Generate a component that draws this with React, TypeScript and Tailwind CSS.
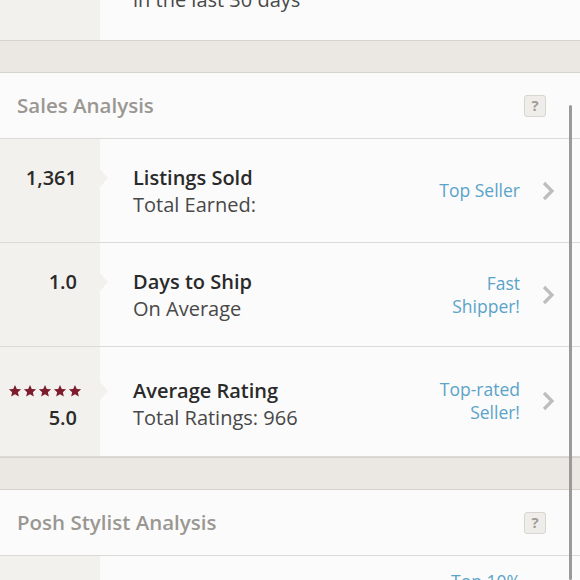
import React from 'react';

const Stars = () => (
	<div className="flex gap-[1px] h-[27px] items-center">
		{[0, 1, 2, 3, 4].map((i) => (
			<svg key={i} width="14" height="14" viewBox="0 0 24 24" fill="#7d1d2c">
				<path d="M12 1.5l3.1 7 7.4.6-5.6 5 1.7 7.4L12 17.6l-6.6 3.9 1.7-7.4-5.6-5 7.4-.6z" />
			</svg>
		))}
	</div>
);

const Chevron = () => (
	<svg width="14" height="22" viewBox="0 0 14 22" fill="none">
		<path d="M3 3l8 8-8 8" stroke="#bdbdbd" strokeWidth="3.2" />
	</svg>
);

type RowProps = {
	value: React.ReactNode;
	valueSub?: React.ReactNode;
	title: string;
	sub: React.ReactNode;
	badge?: React.ReactNode;
	tall?: boolean;
};

const StatRow = ({ value, valueSub, title, sub, badge, tall }: RowProps) => (
	<div className={`flex w-full border-b border-[#dcdad7] ${tall ? 'h-[110px]' : 'h-[104px]'}`}>
		<div className={`w-[100px] shrink-0 bg-[#f3f1ee] flex flex-col items-end justify-center pr-[23px] ${tall ? 'pt-[5px]' : ''}`}>
			{value}
			<div className="h-[27px] text-[20px] leading-[27px] font-semibold text-[#2a2a2a]">{valueSub}</div>
		</div>
		<div className={`flex flex-1 items-center ${tall ? 'pt-[5px]' : ''}`}>
			<div className="relative flex flex-col pl-[33px] flex-1">
				<div className="absolute left-0 top-[5px] w-0 h-0 border-y-[9px] border-y-transparent border-l-[8px] border-l-[#f3f1ee]"></div>
				<div className="text-[20px] leading-[27px] font-semibold text-[#2a2a2a]">{title}</div>
				<div className="text-[20px] leading-[27px] text-[#484848]">{sub}</div>
			</div>
			{badge && (
				<div className={`flex items-center gap-[21px] pr-[25px] ${tall ? '-mt-[6px]' : ''}`}>
					<div className="text-[17.5px] leading-[23px] text-[#5aa3c9] text-right">{badge}</div>
					<Chevron />
				</div>
			)}
		</div>
	</div>
);

const Band = () => <div className="h-[33px] w-full bg-[#ebe8e3] border-y border-[#d6d3ce]"></div>;

const Header = ({ text }: { text: string }) => (
	<div className="flex items-center justify-between h-[66px] w-full border-b border-[#dcdad7] pl-[17px] pr-[34px]">
		<div className="text-[20.5px] font-semibold text-[#9a9793]">{text}</div>
		<div className="w-[22px] h-[22px] rounded-[3px] border border-[#d9d5d0] bg-[#efedea] flex items-center justify-center text-[15px] font-bold text-[#a09c98]">
			?
		</div>
	</div>
);

const Value = ({ children }: { children: React.ReactNode }) => (
	<div className="h-[27px] text-[20px] leading-[27px] font-semibold text-[#2a2a2a]">{children}</div>
);

export default function App() {
	return (
		<div className="relative w-[580px] h-[580px] overflow-hidden bg-[#fbfbfb]" style={{ fontFamily: '"Open Sans", sans-serif' }}>
			<div className="flex flex-col -mt-[65px]">
				<div className="flex w-full h-[105px]">
					<div className="w-[100px] bg-[#f3f1ee]"></div>
					<div className="flex flex-col justify-end pl-[33px] pb-[27px]">
						<div className="text-[20px] leading-[27px] text-[#484848]">in the last 30 days</div>
					</div>
				</div>
				<Band />
				<Header text="Sales Analysis" />
				<StatRow value={<Value>1,361</Value>} title="Listings Sold" sub="Total Earned:" badge="Top Seller" />
				<StatRow value={<Value>1.0</Value>} title="Days to Ship" sub="On Average" badge={<>Fast<br />Shipper!</>} />
				<StatRow
					tall
					value={<div className="-mr-[5px]"><Stars /></div>}
					valueSub="5.0"
					title="Average Rating"
					sub="Total Ratings: 966"
					badge={<>Top-rated<br />Seller!</>}
				/>
				<Band />
				<Header text="Posh Stylist Analysis" />
				<div className="flex w-full h-[104px]">
					<div className="w-[100px] bg-[#f3f1ee]"></div>
					<div className="flex-1 flex justify-end pr-[59px] pt-[14px]">
						<div className="text-[17.5px] leading-[23px] text-[#5aa3c9]">Top 10%</div>
					</div>
				</div>
			</div>
			<div className="absolute right-[8px] top-[105px] bottom-0 w-[3px] rounded-full bg-[#9a9a9a]"></div>
		</div>
	);
}
